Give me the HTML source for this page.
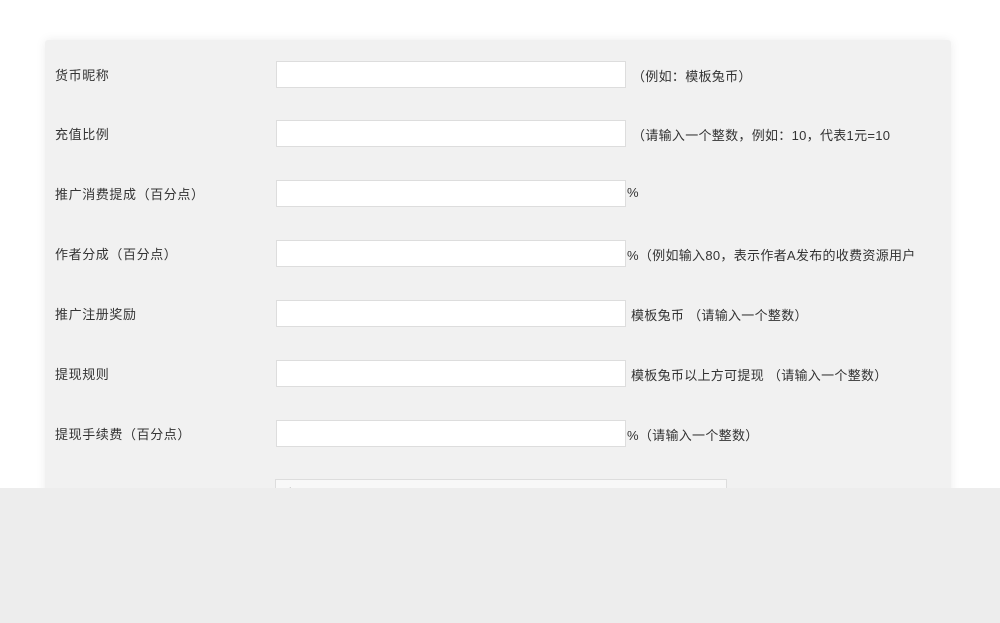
<!DOCTYPE html>
<html><head><meta charset="utf-8"><style>
body{margin:0;width:1000px;height:623px;background:#fff;position:relative;overflow:hidden;font-family:"Liberation Sans","Noto Sans CJK SC",sans-serif;font-size:13px;color:#333}
.panel{position:absolute;left:45px;top:40px;width:906px;height:520px;background:#f1f1f1;box-shadow:0 0 10px rgba(0,0,0,0.08);border-radius:3px}
.row{position:absolute;left:0;width:906px;height:28px}
.lab{position:absolute;left:10px;top:4px;white-space:nowrap;letter-spacing:0.6px}
.inp{position:absolute;left:231px;top:0;width:348px;height:25px;background:#fff;border:1px solid #ddd}
.tip{position:absolute;left:582px;top:5px;white-space:nowrap;letter-spacing:0.3px}
.over{position:absolute;left:0;top:488px;width:1000px;height:135px;background:#ededed}
</style></head><body>
<div class="panel">
<div class="row" style="top:21px"><span class="lab">货币昵称</span><div class="inp"></div><span class="tip" style="left:587px">（例如：模板兔币）</span></div>
<div class="row" style="top:80px"><span class="lab">充值比例</span><div class="inp"></div><span class="tip" style="left:587px">（请输入一个整数，例如：10，代表1元=10</span></div>
<div class="row" style="top:140px"><span class="lab">推广消费提成（百分点）</span><div class="inp"></div><span class="tip">%</span></div>
<div class="row" style="top:200px"><span class="lab">作者分成（百分点）</span><div class="inp"></div><span class="tip">%（例如输入80，表示作者A发布的收费资源用户</span></div>
<div class="row" style="top:260px"><span class="lab">推广注册奖励</span><div class="inp"></div><span class="tip" style="left:586px">模板兔币 （请输入一个整数）</span></div>
<div class="row" style="top:320px"><span class="lab">提现规则</span><div class="inp"></div><span class="tip" style="left:586px">模板兔币以上方可提现 （请输入一个整数）</span></div>
<div class="row" style="top:380px"><span class="lab">提现手续费（百分点）</span><div class="inp"></div><span class="tip">%（请输入一个整数）</span></div>
<div class="row" style="top:439px"><span class="lab" style="top:6px">账号信息</span><div class="inp" style="left:230px;width:450px;background:#f8f8f8"><span style="position:absolute;left:8px;top:4px">文明 ... 15701888</span></div></div>
</div>
<div class="over"></div>
</body></html>
